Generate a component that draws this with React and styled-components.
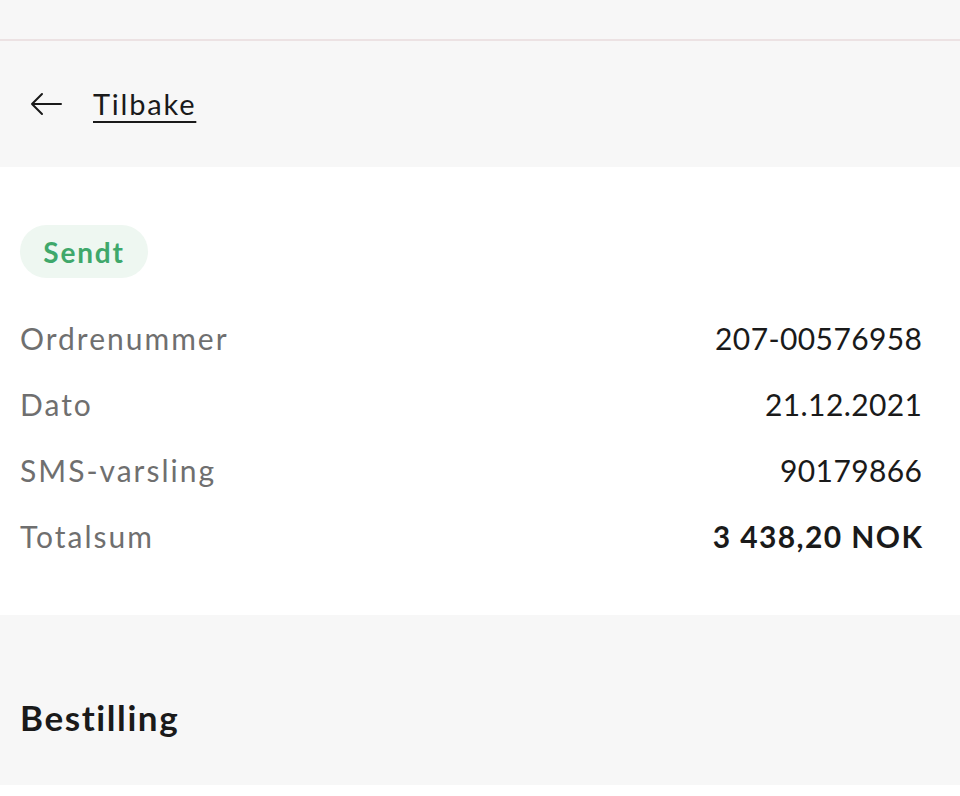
import React from 'react';
import styled, { createGlobalStyle } from 'styled-components';

const GlobalStyle = createGlobalStyle`
  html, body {
    margin: 0;
    padding: 0;
    background: #f7f7f7;
  }
  body {
    font-family: Lato, "Open Sans", sans-serif;
    -webkit-font-smoothing: antialiased;
  }
`;

const Page = styled.div`
  width: 960px;
  height: 796px;
  overflow: hidden;
  background: #f7f7f7;
  display: flex;
  flex-direction: column;
`;

const TopBar = styled.div`
  height: 39px;
  border-bottom: 2px solid #ece2e3;
  background: #f7f7f7;
`;

const BackBar = styled.div`
  height: 126px;
  display: flex;
  align-items: center;
  padding: 0 0 0 30px;
  gap: 31px;
`;

const BackLink = styled.a`
  font-size: 29px;
  letter-spacing: 1.8px;
  color: #1a1a1a;
  text-decoration: underline;
  text-decoration-thickness: 2px;
  text-underline-offset: 6px;
  margin-top: -2px;
`;

const Card = styled.section`
  background: #fff;
  padding: 58px 38px 46px 20px;
`;

const Badge = styled.span`
  display: inline-flex;
  align-items: center;
  justify-content: center;
  width: 128px;
  height: 53px;
  border-radius: 27px;
  background: #eef7f1;
  color: #3fa86b;
  font-size: 28px;
  font-weight: 700;
  letter-spacing: 1.8px;
`;

const List = styled.dl`
  margin: 27px 0 0;
  display: flex;
  flex-direction: column;
`;

const Row = styled.div`
  display: flex;
  justify-content: space-between;
  align-items: center;
  height: 66px;
`;

const Label = styled.dt`
  font-size: 30px;
  letter-spacing: 2px;
  color: #6f6f6f;
`;

const Value = styled.dd`
  margin: 0;
  font-size: 30px;
  color: #1a1a1a;
  font-weight: ${(p) => (p.$bold ? 700 : 400)};
  letter-spacing: ${(p) => (p.$bold ? '1.4px' : '0.4px')};
  margin-right: ${(p) => (p.$bold ? '-1.4px' : '-0.4px')};
`;

const Section = styled.section`
  flex: 1;
  background: #f7f7f7;
  padding: 81px 20px 0;
  border-bottom: 11px solid #fff;
`;

const Heading = styled.h2`
  margin: 0;
  font-size: 35px;
  font-weight: 700;
  letter-spacing: 1.6px;
  color: #1a1a1a;
`;

const ArrowLeft = () => (
  <svg width="32" height="24" viewBox="0 0 32 24" fill="none">
    <path d="M31 12H2M12 2L2 12l10 10" stroke="#1a1a1a" strokeWidth="2" strokeLinecap="round" strokeLinejoin="round" />
  </svg>
);

const rows = [
  { label: 'Ordrenummer', value: '207-00576958' },
  { label: 'Dato', value: '21.12.2021' },
  { label: 'SMS-varsling', value: '90179866' },
  { label: 'Totalsum', value: '3 438,20 NOK', bold: true },
];

export default function App() {
  return (
    <Page>
      <GlobalStyle />
      <TopBar />
      <BackBar>
        <ArrowLeft />
        <BackLink>Tilbake</BackLink>
      </BackBar>
      <Card>
        <Badge>Sendt</Badge>
        <List>
          {rows.map((r) => (
            <Row key={r.label}>
              <Label>{r.label}</Label>
              <Value $bold={r.bold}>{r.value}</Value>
            </Row>
          ))}
        </List>
      </Card>
      <Section>
        <Heading>Bestilling</Heading>
      </Section>
    </Page>
  );
}
